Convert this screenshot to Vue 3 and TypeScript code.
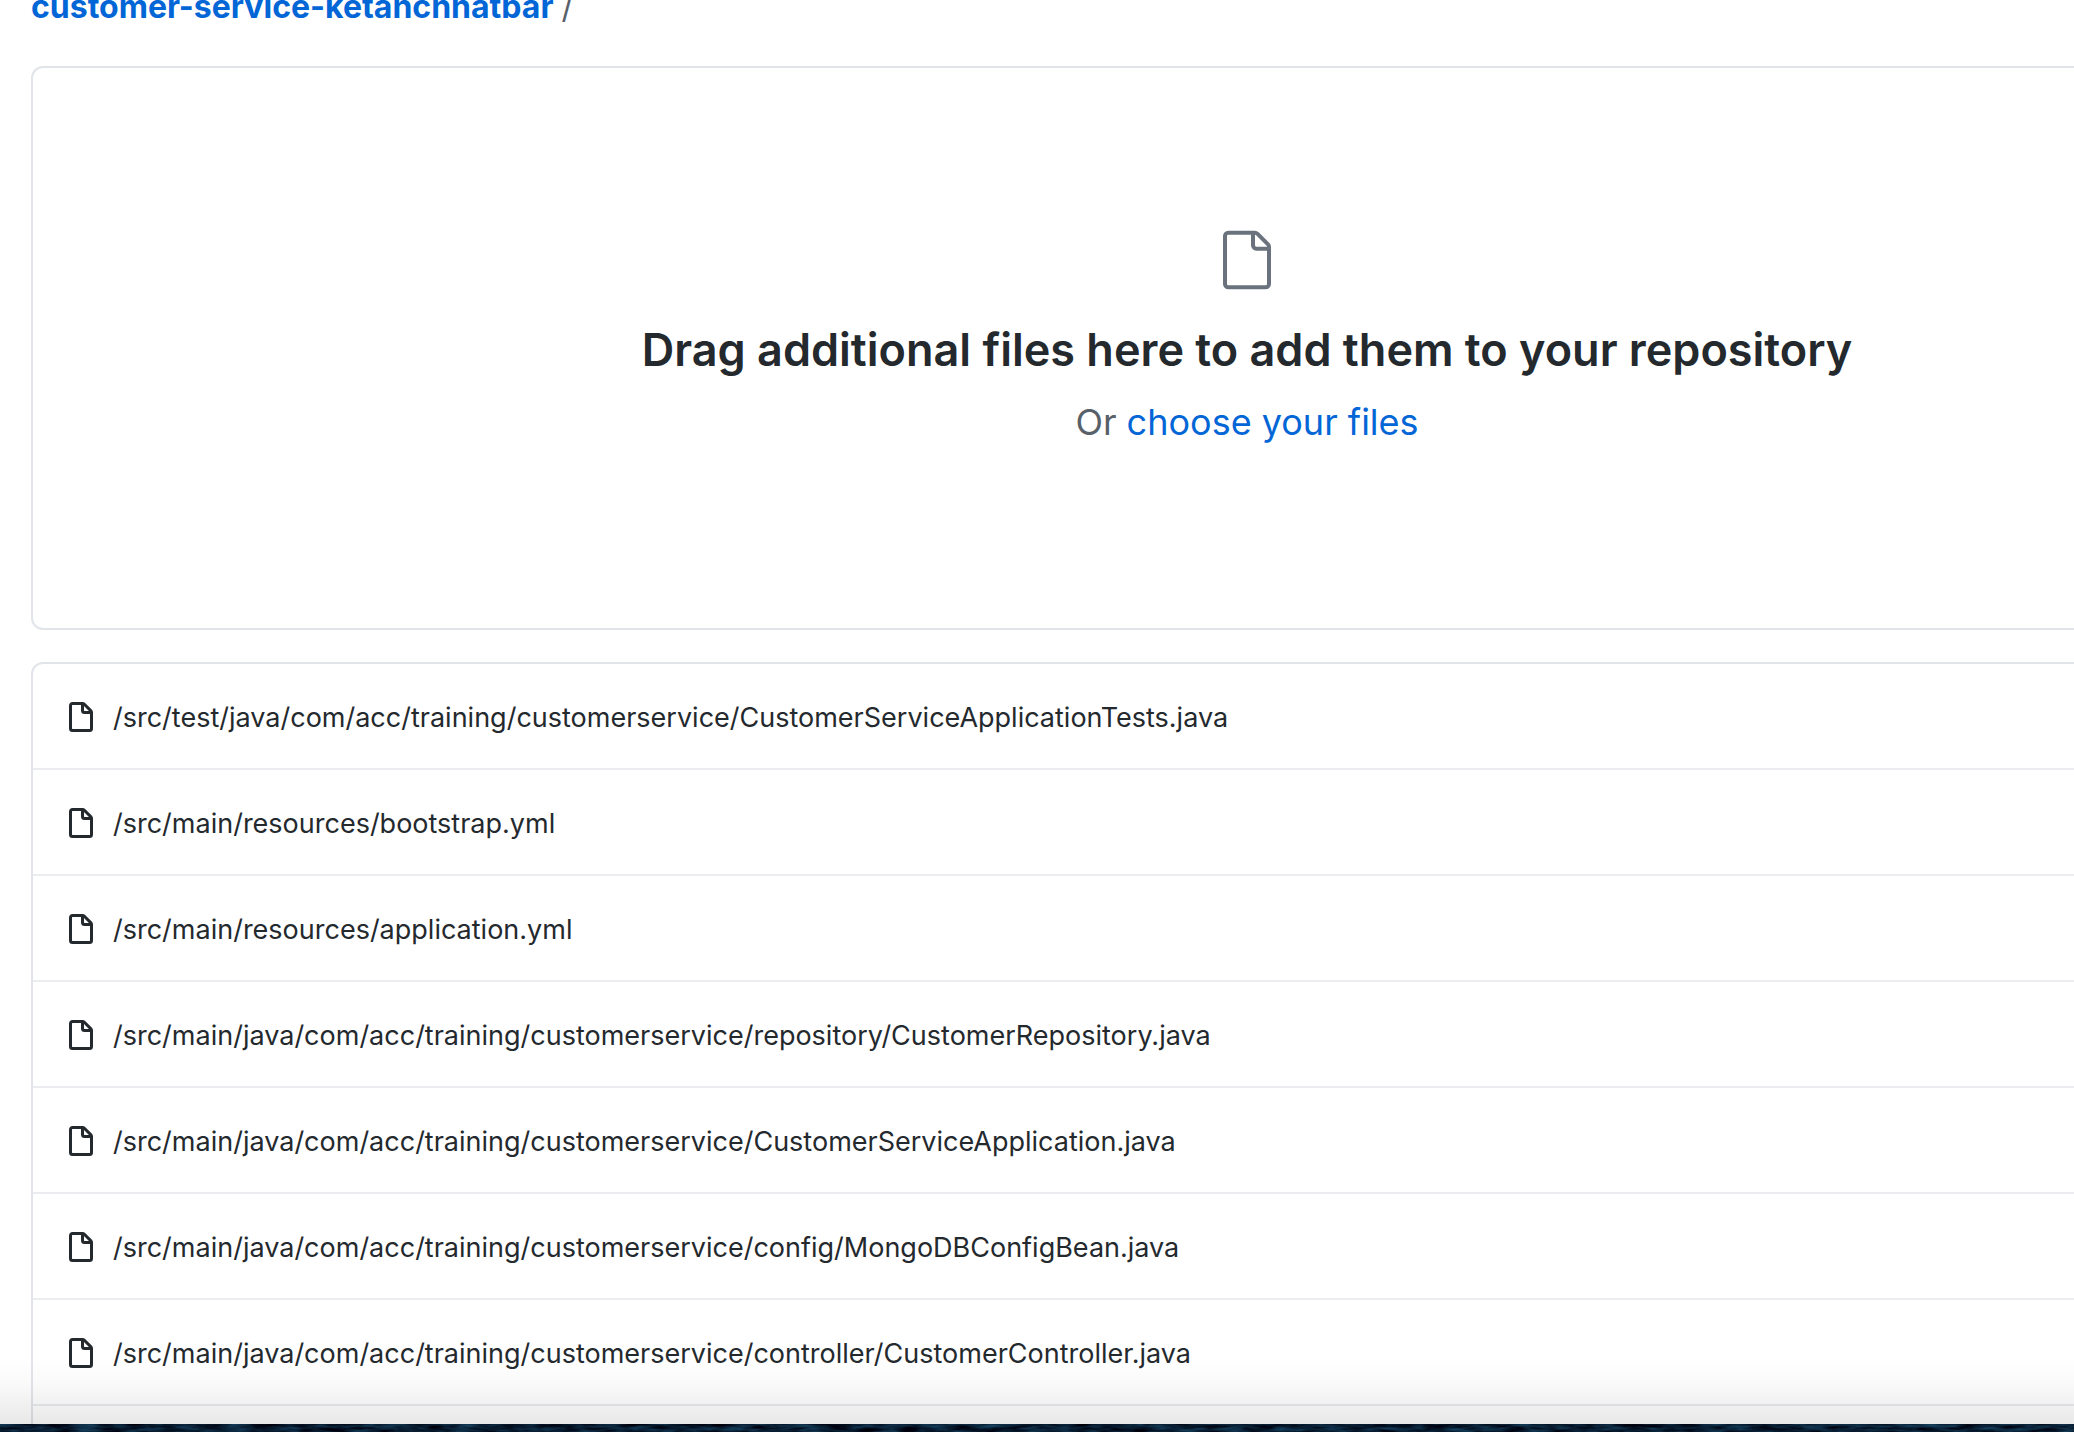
<script setup lang="ts">
const repository = 'customer-service-ketanchhatbar'

const files: string[] = [
  '/src/test/java/com/acc/training/customerservice/CustomerServiceApplicationTests.java',
  '/src/main/resources/bootstrap.yml',
  '/src/main/resources/application.yml',
  '/src/main/java/com/acc/training/customerservice/repository/CustomerRepository.java',
  '/src/main/java/com/acc/training/customerservice/CustomerServiceApplication.java',
  '/src/main/java/com/acc/training/customerservice/config/MongoDBConfigBean.java',
  '/src/main/java/com/acc/training/customerservice/controller/CustomerController.java',
]
</script>

<template>
  <div class="screen">
    <main class="page">
      <nav class="breadcrumb" aria-label="Breadcrumb">
        <a href="#" class="repo">{{ repository }}</a>
        <span class="slash">/</span>
      </nav>

      <section class="panel dropzone">
        <svg class="big-icon" viewBox="0 0 24 24" aria-hidden="true">
          <path
            fill-rule="evenodd"
            d="M5 2.5a.5.5 0 00-.5.5v18a.5.5 0 00.5.5h14a.5.5 0 00.5-.5V8.5h-4a2 2 0 01-2-2v-4H5zm10 0v4a.5.5 0 00.5.5h4a.5.5 0 00-.146-.336l-4.018-4.018A.5.5 0 0015 2.5zM3 3a2 2 0 012-2h9.982a2 2 0 011.414.586l4.018 4.018A2 2 0 0121 7.018V21a2 2 0 01-2 2H5a2 2 0 01-2-2V3z"
          />
        </svg>
        <h1 class="title">Drag additional files here to add them to your repository</h1>
        <p class="hint">Or <a href="#">choose your files</a></p>
      </section>

      <ul class="panel files">
        <li v-for="file in files" :key="file" class="file">
          <svg class="file-icon" viewBox="0 0 16 16" aria-hidden="true">
            <path
              fill-rule="evenodd"
              d="M3.75 1.5a.25.25 0 00-.25.25v11.5c0 .138.112.25.25.25h8.5a.25.25 0 00.25-.25V6H9.75A1.75 1.75 0 018 4.25V1.5H3.75zm5.75.56v2.19c0 .138.112.25.25.25h2.19L9.5 2.06zM2 1.75C2 .784 2.784 0 3.75 0h5.086c.464 0 .909.184 1.237.513l3.414 3.414c.329.328.513.773.513 1.237v8.086A1.75 1.75 0 0112.25 15h-8.5A1.75 1.75 0 012 13.25V1.75z"
            />
          </svg>
          <span>{{ file }}</span>
        </li>
      </ul>
      <div class="shade"></div>
    </main>

    <svg class="desktop" aria-hidden="true">
      <filter
        id="waves"
        x="0"
        y="0"
        width="100%"
        height="100%"
        color-interpolation-filters="sRGB"
      >
        <feTurbulence type="fractalNoise" baseFrequency="0.04 0.25" numOctaves="3" seed="4" />
        <feColorMatrix
          values="0.15 0 0 0 -0.045  0.4 0 0 0 -0.09  0.5 0 0 0 -0.06  0 0 0 0 1"
        />
      </filter>
      <rect width="100%" height="100%" filter="url(#waves)" />
    </svg>
  </div>
</template>

<style>
body {
  margin: 0;
  overflow: hidden;
}
</style>

<style scoped>
.screen {
  display: flex;
  flex-direction: column;
  height: 100vh;
  overflow: hidden;
  background: #fff;
  color: #24292e;
  font-family: Inter, "Liberation Sans", sans-serif;
}

.page {
  position: relative;
  flex: 1;
  min-height: 0;
  padding-left: 31px;
  overflow: hidden;
}

a {
  color: #0366d6;
  text-decoration: none;
}

/* The page is scrolled a little past the top of the breadcrumb. */
.breadcrumb {
  display: flex;
  gap: 8px;
  margin-top: -9px;
  margin-bottom: 43px;
  font-size: 32px;
  line-height: 32px;
}

.repo {
  font-weight: 700;
}

.slash {
  color: #586069;
}

/* The panels run on past the right edge of the window. */
.panel {
  box-sizing: border-box;
  margin: 0 -389px 32px 0;
  border: 2px solid #e1e4e8;
  border-radius: 12px;
}

.dropzone {
  display: flex;
  flex-direction: column;
  align-items: center;
  padding: 160px 0 178px;
  text-align: center;
}

.big-icon {
  width: 64px;
  height: 64px;
  fill: #6a737d;
}

.title {
  margin: 24px 0 0;
  font-size: 45px;
  font-weight: 600;
  line-height: 68px;
}

.hint {
  margin: 10px 0 0;
  color: #586069;
  font-size: 36px;
  line-height: 56px;
}

.files {
  padding: 0 0 104px;
  list-style: none;
}

.file {
  display: flex;
  align-items: center;
  gap: 16px;
  box-sizing: border-box;
  height: 106px;
  padding: 4px 32px 0;
  border-bottom: 2px solid #eaecef;
  font-size: 27px;
  line-height: 42px;
}

.file-icon {
  flex: none;
  width: 32px;
  height: 32px;
  fill: #24292e;
}

.shade {
  position: absolute;
  right: 0;
  bottom: 0;
  left: 0;
  height: 68px;
  background: linear-gradient(
    rgba(0, 0, 0, 0),
    rgba(0, 0, 0, 0.02) 40%,
    rgba(0, 0, 0, 0.09)
  );
  pointer-events: none;
}

.desktop {
  display: block;
  flex: none;
  width: 100%;
  height: 8px;
}
</style>
